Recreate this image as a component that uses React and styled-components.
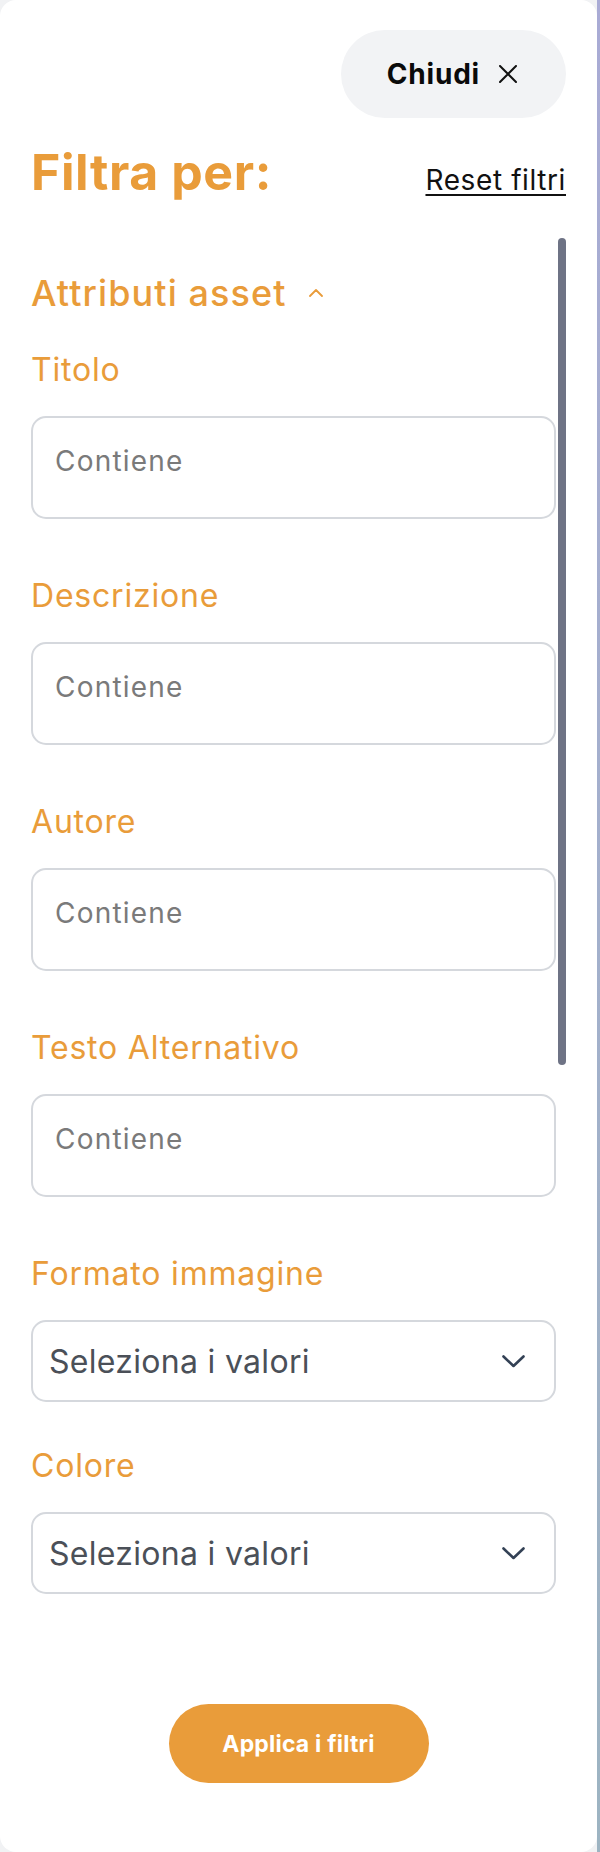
import React from "react";
import styled, { createGlobalStyle } from "styled-components";

const ORANGE = "#e99c3a";

const GlobalStyle = createGlobalStyle`
  * { box-sizing: border-box; }
  body {
    margin: 0;
    background: #f1f2f4;
    font-family: "Inter", "Liberation Sans", sans-serif;
  }
`;

const fields = [
  { label: "Titolo", type: "text" },
  { label: "Descrizione", type: "text" },
  { label: "Autore", type: "text" },
  { label: "Testo Alternativo", type: "text" },
  { label: "Formato immagine", type: "select" },
  { label: "Colore", type: "select" },
];

const CloseIcon = () => (
  <svg width="18" height="18" viewBox="0 0 18 18" fill="none">
    <path d="M1 1L17 17M17 1L1 17" stroke="#111" strokeWidth="2" strokeLinecap="round" />
  </svg>
);

const ChevronUp = () => (
  <svg width="14" height="8" viewBox="0 0 14 8" fill="none">
    <path d="M1 7L7 1L13 7" stroke={ORANGE} strokeWidth="1.8" strokeLinecap="round" strokeLinejoin="round" />
  </svg>
);

const ChevronDown = () => (
  <svg width="23" height="13" viewBox="0 0 23 13" fill="none">
    <path d="M1.5 1.5L11.5 11L21.5 1.5" stroke="#334155" strokeWidth="2.6" strokeLinecap="round" strokeLinejoin="round" />
  </svg>
);

const FilterField = ({ label, type }) => (
  <Field $select={type === "select"}>
    <Label>{label}</Label>
    {type === "select" ? (
      <SelectBox type="button">
        <span>Seleziona i valori</span>
        <ChevronDown />
      </SelectBox>
    ) : (
      <TextBox placeholder="Contiene" />
    )}
  </Field>
);

const App = () => {
  return (
    <Page>
      <GlobalStyle />
      <Panel>
        <TopBar>
          <CloseButton type="button">
            Chiudi
            <CloseIcon />
          </CloseButton>
        </TopBar>
        <Header>
          <Title>Filtra per:</Title>
          <ResetLink href="#">Reset filtri</ResetLink>
        </Header>
        <ScrollArea>
          <Thumb />
          <SectionHeader>
            <span>Attributi asset</span>
            <ChevronUp />
          </SectionHeader>
          {fields.map((f) => (
            <FilterField key={f.label} label={f.label} type={f.type} />
          ))}
        </ScrollArea>
        <Footer>
          <ApplyButton type="button">Applica i filtri</ApplyButton>
        </Footer>
      </Panel>
      <EdgeStrip />
    </Page>
  );
};

const Page = styled.div`
  display: flex;
  min-height: 1852px;
`;

const Panel = styled.aside`
  width: 597px;
  min-height: 1852px;
  background: #ffffff;
  border-radius: 16px;
  padding: 30px 31px 69px 31px;
  display: flex;
  flex-direction: column;
`;

const EdgeStrip = styled.div`
  flex: 1;
  background: linear-gradient(180deg, #a9abd5 0%, #a3b0cc 50%, #9db4c2 100%);
`;

const TopBar = styled.div`
  display: flex;
  justify-content: flex-end;
`;

const CloseButton = styled.button`
  height: 88px;
  padding: 0 49px 0 46px;
  border: none;
  border-radius: 44px;
  background: #f2f3f5;
  display: flex;
  align-items: center;
  gap: 19px;
  font-family: inherit;
  font-size: 28px;
  font-weight: 700;
  letter-spacing: 0.8px;
  color: #0a0a0a;
  cursor: pointer;
`;

const Header = styled.div`
  margin-top: 24px;
  display: flex;
  justify-content: space-between;
  align-items: baseline;
`;

const Title = styled.h1`
  margin: 0;
  font-size: 50px;
  line-height: 60px;
  font-weight: 700;
  letter-spacing: 0.6px;
  color: ${ORANGE};
`;

const ResetLink = styled.a`
  font-size: 28px;
  font-weight: 400;
  letter-spacing: 0.6px;
  color: #111;
  text-decoration: underline;
  text-decoration-thickness: 2px;
  text-underline-offset: 4px;
`;

const ScrollArea = styled.div`
  position: relative;
  margin-top: 36px;
  padding: 33px 10px 0 0;
`;

const Thumb = styled.div`
  position: absolute;
  top: 0;
  right: 0;
  width: 8px;
  height: 827px;
  border-radius: 4px;
  background: #6e7385;
`;

const SectionHeader = styled.div`
  display: flex;
  align-items: center;
  gap: 22px;
  height: 44px;
  margin-bottom: 35px;
  font-size: 36px;
  font-weight: 500;
  letter-spacing: 1.1px;
  color: ${ORANGE};
`;

const Field = styled.div`
  display: flex;
  flex-direction: column;
  margin-bottom: ${(p) => (p.$select ? "44px" : "57px")};
`;

const Label = styled.label`
  font-size: 32px;
  line-height: 40px;
  font-weight: 400;
  letter-spacing: 0.8px;
  color: ${ORANGE};
  margin-bottom: 26px;
`;

const TextBox = styled.textarea`
  display: block;
  width: 100%;
  height: 103px;
  resize: none;
  border: 2px solid #d5d8dd;
  border-radius: 15px;
  padding: 23px 22px;
  font-family: inherit;
  font-size: 28px;
  line-height: 40px;
  letter-spacing: 1.2px;
  color: #333;
  background: #fff;
  outline: none;
  &::placeholder {
    color: #7a7a7a;
  }
`;

const SelectBox = styled.button`
  width: 100%;
  height: 82px;
  border: 2px solid #d5d8dd;
  border-radius: 15px;
  background: #fff;
  padding: 0 29px 0 16px;
  display: flex;
  align-items: center;
  justify-content: space-between;
  font-family: inherit;
  font-size: 32px;
  letter-spacing: 0.3px;
  color: #4b5058;
  cursor: pointer;
`;

const Footer = styled.div`
  margin-top: auto;
  display: flex;
  justify-content: center;
`;

const ApplyButton = styled.button`
  width: 260px;
  height: 79px;
  border: none;
  border-radius: 40px;
  background: ${ORANGE};
  color: #fff;
  font-family: inherit;
  font-size: 23px;
  font-weight: 700;
  letter-spacing: 0.2px;
  cursor: pointer;
`;

export default App;
